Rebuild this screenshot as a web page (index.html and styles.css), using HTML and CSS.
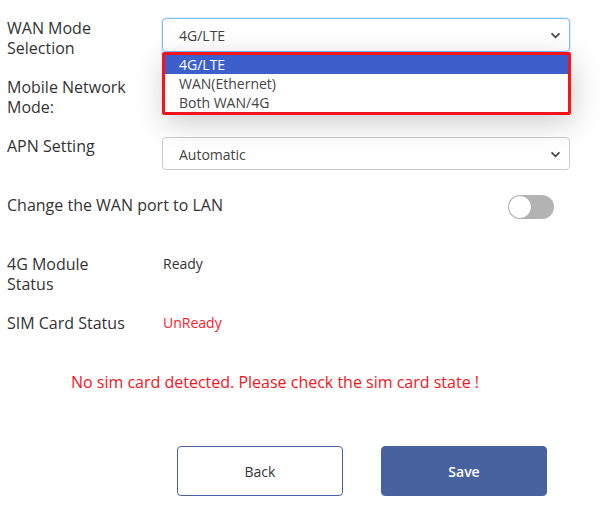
FILE: index.html
```html
<!DOCTYPE html>
<html>
<head>
<meta charset="utf-8">
<link rel="stylesheet" href="styles.css">
</head>
<body>
<div class="page">
  <div class="row r1">
    <div class="label">WAN Mode<br>Selection</div>
    <div class="field">
      <div class="select focused"><span>4G/LTE</span><svg class="chev" viewBox="0 0 12 8" width="11" height="7"><path d="M1.5 1.5 L6 6 L10.5 1.5" fill="none" stroke="#444" stroke-width="2"/></svg></div>
      <div class="dropdown">
        <div class="opt sel">4G/LTE</div>
        <div class="opt">WAN(Ethernet)</div>
        <div class="opt">Both WAN/4G</div>
      </div>
    </div>
  </div>
  <div class="row r2">
    <div class="label">Mobile Network<br>Mode:</div>
    <div class="field"></div>
  </div>
  <div class="row r3">
    <div class="label lab-apn">APN Setting</div>
    <div class="field">
      <div class="select"><span>Automatic</span><svg class="chev" viewBox="0 0 12 8" width="11" height="7"><path d="M1.5 1.5 L6 6 L10.5 1.5" fill="none" stroke="#444" stroke-width="2"/></svg></div>
    </div>
  </div>
  <div class="row r4">
    <div class="label wide">Change the WAN port to LAN</div>
    <div class="toggle"><div class="knob"></div></div>
  </div>
  <div class="row r5">
    <div class="label">4G Module<br>Status</div>
    <div class="value">Ready</div>
  </div>
  <div class="row r6">
    <div class="label">SIM Card Status</div>
    <div class="value red">UnReady</div>
  </div>
  <div class="msg">No sim card detected. Please check the sim card state !</div>
  <div class="buttons">
    <button class="btn back">Back</button>
    <button class="btn save">Save</button>
  </div>
</div>
</body>
</html>
```
FILE: styles.css
```css
html, body {
  margin: 0;
  padding: 0;
  background: #fff;
}
body {
  font-family: "Open Sans", "Noto Sans", sans-serif;
  color: #333;
  width: 600px;
  height: 509px;
  overflow: hidden;
}
.page {
  padding-top: 18px;
  padding-left: 7px;
}
.row {
  display: flex;
  align-items: flex-start;
}
.label {
  width: 155px;
  font-size: 16px;
  line-height: 20px;
  color: #333;
  flex: none;
}
.label.wide {
  width: 501px;
}
.field {
  position: relative;
  width: 408px;
}
.r1 { height: 40px; }
.r2 { height: 40px; margin-top: 19px; }
.r3 { height: 33px; margin-top: 20px; }
.lab-apn { margin-top: -1px; }
.r4 { height: 25px; margin-top: 25px; }
.r5 { height: 40px; margin-top: 34px; }
.r6 { height: 20px; margin-top: 19px; }
.select {
  box-sizing: border-box;
  height: 34px;
  width: 408px;
  border: 1px solid #ccc;
  border-radius: 4px;
  display: flex;
  align-items: center;
  justify-content: space-between;
  padding: 1px 8px 0 16px;
  font-size: 14px;
  color: #444;
  background: #fff;
}
.r3 .select { height: 33px; }
.select.focused {
  border-color: #80bdff;
  box-shadow: 0 0 0 1px rgba(128, 189, 255, 0.25);
}
.chev { flex: none; }
.dropdown {
  position: absolute;
  left: 0;
  top: 34px;
  width: 409px;
  box-sizing: border-box;
  border: 3px solid #f5141c;
  border-radius: 2px;
  background: #fff;
  z-index: 5;
  box-shadow: 2px 8px 30px rgba(0, 0, 0, 0.2);
}
.opt {
  height: 19px;
  line-height: 19px;
  font-size: 14px;
  padding-left: 14px;
  color: #444;
}
.opt.sel {
  background: #3c5fcb;
  color: #fff;
}
.toggle {
  position: relative;
  width: 46px;
  height: 24px;
  border-radius: 12px;
  background: #b3b3b3;
  flex: none;
  margin-top: 0;
}
.knob {
  position: absolute;
  left: 1px;
  top: 1px;
  width: 22px;
  height: 22px;
  border-radius: 50%;
  background: #fff;
  box-shadow: 0 0 1px rgba(0,0,0,0.3);
}
.value {
  font-size: 14px;
  line-height: 20px;
  color: #333;
  margin-left: 1px;
}
.value.red { color: #ff1a2a; }
.msg {
  margin-top: 39px;
  width: 536px;
  text-align: center;
  color: #f5141c;
  font-size: 16px;
  line-height: 20px;
}
.buttons {
  display: flex;
  gap: 38px;
  margin-top: 54px;
  padding-left: 170px;
}
.btn {
  box-sizing: border-box;
  width: 166px;
  height: 50px;
  border-radius: 4px;
  font-family: "Open Sans", "Noto Sans", sans-serif;
  font-size: 14px;
  cursor: pointer;
}
.btn.back {
  background: #fff;
  border: 1px solid #4762a3;
  color: #333;
}
.btn.save {
  background: #4862a0;
  border: 1px solid #4862a0;
  color: #fff;
  font-weight: 600;
}
```
